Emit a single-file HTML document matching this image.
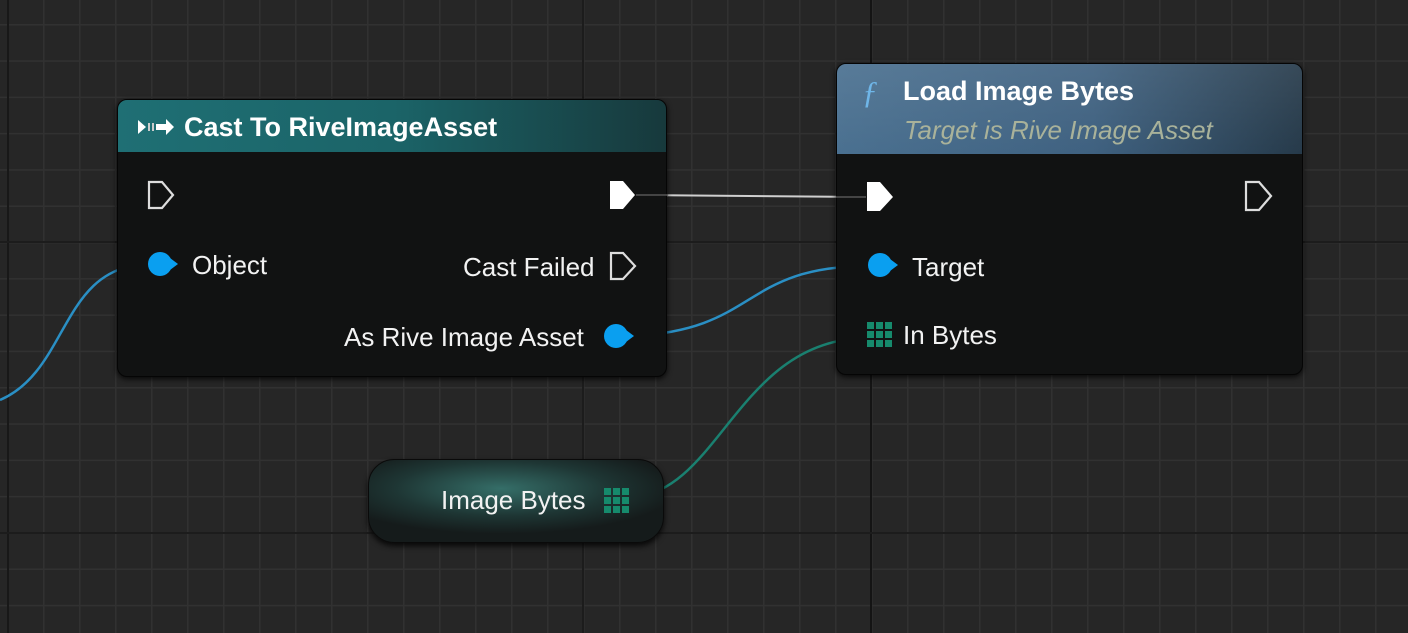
<!DOCTYPE html>
<html><head><meta charset="utf-8"><style>
html,body{margin:0;padding:0;width:1408px;height:633px;overflow:hidden;background:#262626;font-family:"Liberation Sans",sans-serif;}
.abs{position:absolute;}
.node{position:absolute;background:#111212;border-radius:10px;box-shadow:0 2px 6px rgba(0,0,0,.8);border:1px solid #050505;overflow:hidden;}
.t{position:absolute;color:#f2f2f2;font-size:26px;white-space:nowrap;line-height:1;}
.h{position:absolute;color:#fff;font-size:27px;font-weight:bold;white-space:nowrap;line-height:1;}
</style></head><body>
<svg class="abs" style="left:0;top:0" width="1408" height="633">
<defs>
<pattern id="g" x="7" y="24" width="36" height="36.3" patternUnits="userSpaceOnUse">
<rect x="0" y="0" width="1.5" height="36.3" fill="#313131"/>
<rect x="0" y="0" width="36" height="1.5" fill="#313131"/>
</pattern>
</defs>
<rect width="1408" height="633" fill="#262626"/>
<rect width="1408" height="633" fill="url(#g)"/>
<rect x="7" y="0" width="2" height="633" fill="#181818"/>
<rect x="582" y="0" width="2" height="633" fill="#1c1c1c"/>
<rect x="870" y="0" width="2" height="633" fill="#141414"/>
<rect x="0" y="241" width="1408" height="2" fill="#1c1c1c"/>
<rect x="0" y="532" width="1408" height="2" fill="#1c1c1c"/>
<path d="M0,400 C70,370 60,265 150,264" stroke="#2a8fc4" stroke-width="2.5" fill="none"/>
<path d="M632,336 C760,330 740,266 870,266" stroke="#2a8fc4" stroke-width="2.5" fill="none"/>
<path d="M636,195 L866,197" stroke="#cfcfcf" stroke-width="2" fill="none"/>
<path d="M634,497 C720,490 740,338 868,338" stroke="#1a8070" stroke-width="2.5" fill="none"/>
</svg>

<!-- Cast node -->
<div class="node" style="left:117px;top:99px;width:548px;height:276px;">
 <div class="abs" style="left:0;top:0;width:548px;height:52px;background:linear-gradient(90deg,#1f6f74 0%,#1b6468 50%,#17393c 100%);"></div>
</div>
<svg class="abs" style="left:136px;top:116px" width="42" height="22">
<path d="M2,4 L10,11 L2,18Z" fill="#fff"/><rect x="12" y="7" width="2" height="8" fill="#ccc"/><rect x="16" y="7" width="2" height="8" fill="#ccc"/>
<path d="M20,8 H30 V3 L38,11 L30,19 V14 H20Z" fill="#fff"/>
</svg>
<div class="h" style="left:184px;top:114px;">Cast To RiveImageAsset</div>
<div class="t" style="left:192px;top:252px;">Object</div>
<div class="t" style="left:463px;top:254px;">Cast Failed</div>
<div class="t" style="left:344px;top:324px;">As Rive Image Asset</div>

<!-- Load node -->
<div class="node" style="left:836px;top:63px;width:465px;height:310px;">
 <div class="abs" style="left:0;top:0;width:465px;height:90px;background:linear-gradient(180deg,rgba(255,255,255,.08),rgba(0,0,0,0)),linear-gradient(90deg,#4a7090 0%,#3f6180 55%,#263a4a 100%);"></div>
</div>
<div class="abs" style="left:862px;top:74px;color:#6fb6e8;font-size:32px;font-style:italic;font-family:'Liberation Serif',serif;">ƒ</div>
<div class="h" style="left:903px;top:78px;">Load Image Bytes</div>
<div class="t" style="left:904px;top:117px;color:#a9b29a;font-style:italic;">Target is Rive Image Asset</div>
<div class="t" style="left:912px;top:254px;">Target</div>
<svg class="abs" style="left:867px;top:322px" width="26" height="26">
<g fill="#168a6c"><rect x="0" y="0" width="7" height="7"/><rect x="9" y="0" width="7" height="7"/><rect x="18" y="0" width="7" height="7"/><rect x="0" y="9" width="7" height="7"/><rect x="9" y="9" width="7" height="7"/><rect x="18" y="9" width="7" height="7"/><rect x="0" y="18" width="7" height="7"/><rect x="9" y="18" width="7" height="7"/><rect x="18" y="18" width="7" height="7"/></g></svg>
<div class="t" style="left:903px;top:322px;">In Bytes</div>

<!-- Image Bytes node -->
<div class="abs" style="left:368px;top:459px;width:294px;height:82px;border-radius:26px;background:radial-gradient(ellipse 60% 55% at 45% 35%,#356e68 0%,#1e3634 60%,#151b1b 100%);box-shadow:0 3px 6px rgba(0,0,0,.8);border:1px solid #0a0a0a;"></div>
<div class="t" style="left:441px;top:487px;">Image Bytes</div>
<svg class="abs" style="left:604px;top:488px" width="26" height="26">
<g fill="#168a6c"><rect x="0" y="0" width="7" height="7"/><rect x="9" y="0" width="7" height="7"/><rect x="18" y="0" width="7" height="7"/><rect x="0" y="9" width="7" height="7"/><rect x="9" y="9" width="7" height="7"/><rect x="18" y="9" width="7" height="7"/><rect x="0" y="18" width="7" height="7"/><rect x="9" y="18" width="7" height="7"/><rect x="18" y="18" width="7" height="7"/></g></svg>

<!-- pins on top -->
<svg class="abs" style="left:0;top:0" width="1408" height="633">
<path d="M636,195 L668,195" stroke="#555" stroke-width="1.5"/>
<path d="M836,197 L866,197" stroke="#555" stroke-width="1.5"/>
<path d="M149,182 H162 L173,195 L162,208 H149Z" stroke="#ddd" stroke-width="2.2" fill="none"/>
<path d="M610,181 H623 L635,195 L623,209 H610Z" fill="#fff"/>
<path d="M611,253 H623 L635,266 L623,279 H611Z" stroke="#ddd" stroke-width="2.2" fill="none"/>
<path d="M1246,182 H1259 L1271,196 L1259,210 H1246Z" stroke="#ddd" stroke-width="2.2" fill="none"/>
<path d="M867,182 H880 L893,197 L880,211 H867Z" fill="#fff"/>
<circle cx="160" cy="264" r="12" fill="#0a9ff0"/><path d="M170,258 L178,264 L170,270Z" fill="#0a9ff0"/>
<circle cx="616" cy="336" r="12" fill="#0a9ff0"/><path d="M626,330 L634,336 L626,342Z" fill="#0a9ff0"/>
<circle cx="880" cy="265" r="12" fill="#0a9ff0"/><path d="M890,259 L898,265 L890,271Z" fill="#0a9ff0"/>
</svg>
</body></html>
